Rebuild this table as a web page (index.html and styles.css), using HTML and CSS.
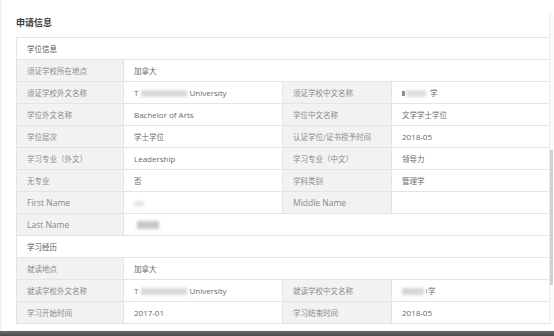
FILE: index.html
```html
<!DOCTYPE html>
<html lang="zh-CN">
<head>
<meta charset="utf-8">
<title>申请信息</title>
<link rel="stylesheet" href="styles.css">
</head>
<body>
<div class="page">
  <div class="panel">
    <h2 class="title">申请信息</h2>
    <table class="info">
      <colgroup>
        <col class="c1"><col class="c2"><col class="c3"><col class="c4">
      </colgroup>
      <tbody>
        <tr class="section"><td colspan="4">学位信息</td></tr>
        <tr><th>须证学校所在地点</th><td colspan="3">加拿大</td></tr>
        <tr><th>须证学校外文名称</th><td><span class="en">T</span><span class="blur b-uni"></span><span class="en">University</span></td><th>须证学校中文名称</th><td><span class="frag"></span><span class="blur b-cn"></span>学</td></tr>
        <tr><th>学位外文名称</th><td><span class="en">Bachelor of Arts</span></td><th>学位中文名称</th><td>文学学士学位</td></tr>
        <tr><th>学位层次</th><td>学士学位</td><th>认证学位/证书授予时间</th><td><span class="en">2018-05</span></td></tr>
        <tr><th>学习专业（外文）</th><td><span class="en">Leadership</span></td><th>学习专业（中文）</th><td>领导力</td></tr>
        <tr><th>无专业</th><td>否</td><th>学科类别</th><td>管理学</td></tr>
        <tr><th><span class="en en-label">First Name</span></th><td><span class="blur b-first"></span></td><th><span class="en en-label">Middle Name</span></th><td></td></tr>
        <tr><th><span class="en en-label">Last Name</span></th><td colspan="3"><span class="blur b-last"></span></td></tr>
        <tr class="section"><td colspan="4">学习经历</td></tr>
        <tr><th>就读地点</th><td colspan="3">加拿大</td></tr>
        <tr><th>就读学校外文名称</th><td><span class="en">T</span><span class="blur b-uni"></span><span class="en">University</span></td><th>就读学校中文名称</th><td><span class="blur b-cn2"></span><span class="frag2"></span>学</td></tr>
        <tr><th>学习开始时间</th><td><span class="en">2017-01</span></td><th>学习结束时间</th><td><span class="en">2018-05</span></td></tr>
      </tbody>
    </table>
  </div>
  <div class="scrollbar"><div class="thumb"></div></div>
</div>
<div class="footer-bar"></div>
</body>
</html>
```

FILE: styles.css
```css
* { box-sizing: border-box; }
html, body { margin: 0; padding: 0; background: #fff; }
body {
  font-family: "Noto Sans CJK SC", "Open Sans", sans-serif;
  color: #555;
  width: 554px;
  height: 336px;
  overflow: hidden;
}
.page {
  position: relative;
  height: 331px;
  border-left: 2px solid #f3f3f3;
  overflow: hidden;
}
.panel {
  padding: 16px 5px 0 14px;
}
.title {
  margin: 0;
  height: 21px;
  font-family: "Noto Sans CJK SC", sans-serif;
  font-size: 9px;
  font-weight: 700;
  color: #3a3a3a;
  line-height: 14px;
}
.info {
  width: 533px;
  border-collapse: collapse;
  table-layout: fixed;
  font-size: 7.5px;
}
.info col.c1 { width: 107px; }
.info col.c2 { width: 159px; }
.info col.c3 { width: 109px; }
.info col.c4 { width: 158px; }
.info th, .info td {
  height: 22px;
  padding: 0 0 0 10px;
  border: 1px solid #e4e4e4;
  text-align: left;
  vertical-align: middle;
  white-space: nowrap;
  overflow: hidden;
  font-family: "Noto Sans CJK SC", "Open Sans", sans-serif;
  line-height: 10px;
}
.info th {
  font-weight: 400;
  background: #f2f2f2;
  color: #8a8a8a;
}
.info td { color: #6a6a6a; background: #fff; }
.info tr.section td {
  color: #555;
  background: #fff;
}
.en {
  font-family: "Open Sans", "Noto Sans CJK SC", sans-serif;
  font-size: 8px;
}
.en-label { font-size: 8.5px; }
.blur {
  display: inline-block;
  vertical-align: middle;
  height: 7px;
  background: #d4d4d4;
  filter: blur(1.5px);
}
.b-uni { width: 46px; margin: 0 2px 0 3px; background: #d8d8d8; }
.b-cn { width: 20px; margin: 0 4px 0 1px; background: #dedede; }
.b-cn2 { width: 22px; margin: 0 2px 0 0; background: #d6d6d6; }
.b-first { width: 10px; height: 5px; background: #e4e4e4; }
.b-last { width: 22px; height: 8px; margin-left: 3px; background: #c8c8c8; }
.frag {
  display: inline-block;
  vertical-align: middle;
  width: 3px;
  height: 5px;
  background: #888;
}
.frag2 {
  display: inline-block;
  vertical-align: middle;
  width: 1px;
  height: 4px;
  background: #aaa;
  margin-right: 1px;
}
.scrollbar {
  position: absolute;
  top: 13px;
  right: 1px;
  width: 4px;
  height: 312px;
  border-left: 1px solid #ececec;
  background: #fafafa;
}
.thumb {
  position: absolute;
  top: 137px;
  left: 0;
  width: 3px;
  height: 135px;
  background: #d0d0d0;
}
.footer-bar {
  height: 5px;
  background: linear-gradient(#6a6a6a, #4a4a4a);
}
```
